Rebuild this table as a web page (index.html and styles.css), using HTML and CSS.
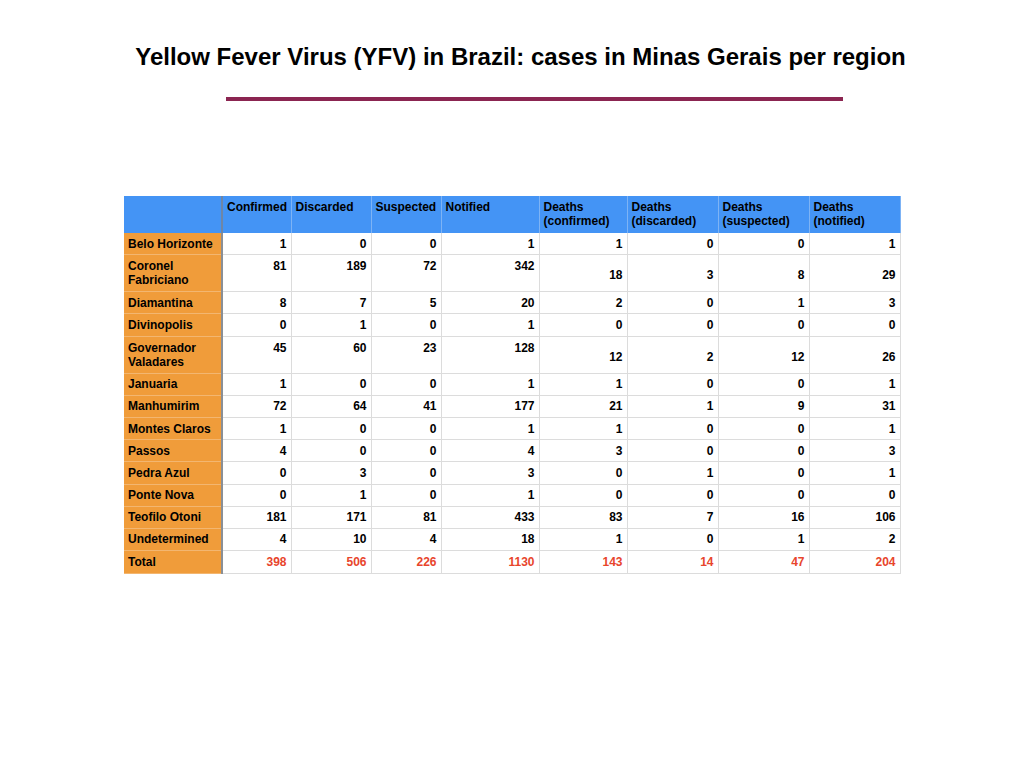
FILE: index.html
```html
<!DOCTYPE html>
<html>
<head>
<meta charset="utf-8">
<link rel="stylesheet" href="styles.css">
</head>
<body>
<div class="slide">
  <h1 class="title">Yellow Fever Virus (YFV) in Brazil: cases in Minas Gerais per region</h1>
  <div class="rule"></div>
  <table class="data">
    <colgroup>
      <col class="c0"><col class="c1"><col class="c2"><col class="c3"><col class="c4"><col class="c5"><col class="c6"><col class="c7"><col class="c8">
    </colgroup>
    <thead>
      <tr>
        <th class="corner"></th>
        <th>Confirmed</th><th>Discarded</th><th>Suspected</th><th>Notified</th>
        <th>Deaths<br>(confirmed)</th><th>Deaths<br>(discarded)</th><th>Deaths<br>(suspected)</th><th>Deaths<br>(notified)</th>
      </tr>
    </thead>
    <tbody>
      <tr><th>Belo Horizonte</th><td>1</td><td>0</td><td>0</td><td>1</td><td class="d">1</td><td class="d">0</td><td class="d">0</td><td class="d">1</td></tr>
      <tr class="tall"><th>Coronel<br>Fabriciano</th><td>81</td><td>189</td><td>72</td><td>342</td><td class="d">18</td><td class="d">3</td><td class="d">8</td><td class="d">29</td></tr>
      <tr><th>Diamantina</th><td>8</td><td>7</td><td>5</td><td>20</td><td class="d">2</td><td class="d">0</td><td class="d">1</td><td class="d">3</td></tr>
      <tr><th>Divinopolis</th><td>0</td><td>1</td><td>0</td><td>1</td><td class="d">0</td><td class="d">0</td><td class="d">0</td><td class="d">0</td></tr>
      <tr class="tall"><th>Governador<br>Valadares</th><td>45</td><td>60</td><td>23</td><td>128</td><td class="d">12</td><td class="d">2</td><td class="d">12</td><td class="d">26</td></tr>
      <tr><th>Januaria</th><td>1</td><td>0</td><td>0</td><td>1</td><td class="d">1</td><td class="d">0</td><td class="d">0</td><td class="d">1</td></tr>
      <tr><th>Manhumirim</th><td>72</td><td>64</td><td>41</td><td>177</td><td class="d">21</td><td class="d">1</td><td class="d">9</td><td class="d">31</td></tr>
      <tr><th>Montes Claros</th><td>1</td><td>0</td><td>0</td><td>1</td><td class="d">1</td><td class="d">0</td><td class="d">0</td><td class="d">1</td></tr>
      <tr><th>Passos</th><td>4</td><td>0</td><td>0</td><td>4</td><td class="d">3</td><td class="d">0</td><td class="d">0</td><td class="d">3</td></tr>
      <tr><th>Pedra Azul</th><td>0</td><td>3</td><td>0</td><td>3</td><td class="d">0</td><td class="d">1</td><td class="d">0</td><td class="d">1</td></tr>
      <tr><th>Ponte Nova</th><td>0</td><td>1</td><td>0</td><td>1</td><td class="d">0</td><td class="d">0</td><td class="d">0</td><td class="d">0</td></tr>
      <tr><th>Teofilo Otoni</th><td>181</td><td>171</td><td>81</td><td>433</td><td class="d">83</td><td class="d">7</td><td class="d">16</td><td class="d">106</td></tr>
      <tr><th>Undetermined</th><td>4</td><td>10</td><td>4</td><td>18</td><td class="d">1</td><td class="d">0</td><td class="d">1</td><td class="d">2</td></tr>
      <tr class="total"><th>Total</th><td>398</td><td>506</td><td>226</td><td>1130</td><td class="d">143</td><td class="d">14</td><td class="d">47</td><td class="d">204</td></tr>
    </tbody>
  </table>
</div>
</body>
</html>
```

FILE: styles.css
```css
html, body {
  margin: 0;
  padding: 0;
  background: #ffffff;
}

.slide {
  width: 1024px;
  height: 768px;
  font-family: "Liberation Sans", Arial, sans-serif;
  color: #000;
  display: flex;
  flex-direction: column;
}

.title {
  margin: 42px 0 0 0;
  padding-left: 17px;
  font-size: 24px;
  font-weight: bold;
  line-height: 30px;
  text-align: center;
}

.rule {
  margin: 25px 0 0 226px;
  width: 617px;
  height: 4px;
  background: #8b2551;
}

.data {
  margin: 95px 0 0 124px;
  width: 776px;
  border-collapse: collapse;
  table-layout: fixed;
  font-size: 12px;
  font-weight: bold;
}

.c0 { width: 98px; }
.c1 { width: 69px; }
.c2 { width: 80px; }
.c3 { width: 70px; }
.c4 { width: 98px; }
.c5 { width: 88px; }
.c6 { width: 91px; }
.c7 { width: 91px; }
.c8 { width: 91px; }

.data thead th {
  background: #4494f5;
  text-align: left;
  vertical-align: top;
  padding: 4px 4px 0 4px;
  height: 33px;
  line-height: 14px;
  border-right: 1px solid #7db3f5;
  font-weight: bold;
}

.data thead th.corner {
  border-right: 2px solid #6f86a6;
}

.data tbody th {
  background: #f09c3a;
  text-align: left;
  padding: 0 4px;
  height: 21.2px;
  line-height: 14px;
  border-bottom: 1px solid #f3b670;
  border-right: 2px solid #8a8f96;
  font-weight: bold;
  vertical-align: middle;
}

.data tbody td {
  text-align: right;
  padding: 0 4px 0 4px;
  height: 21.2px;
  line-height: 14px;
  border-bottom: 1px solid #dcdcdc;
  border-right: 1px solid #dcdcdc;
  vertical-align: middle;
}

.data tbody tr.tall th,
.data tbody tr.tall td {
  height: 32px;
  vertical-align: top;
  padding-top: 4px;
}

.data tbody tr.tall td.d {
  vertical-align: middle;
  padding-top: 4px;
}

.data tbody tr.total td {
  color: #e8452c;
}

.data tbody tr.total th,
.data tbody tr.total td {
  height: 22px;
}
```
